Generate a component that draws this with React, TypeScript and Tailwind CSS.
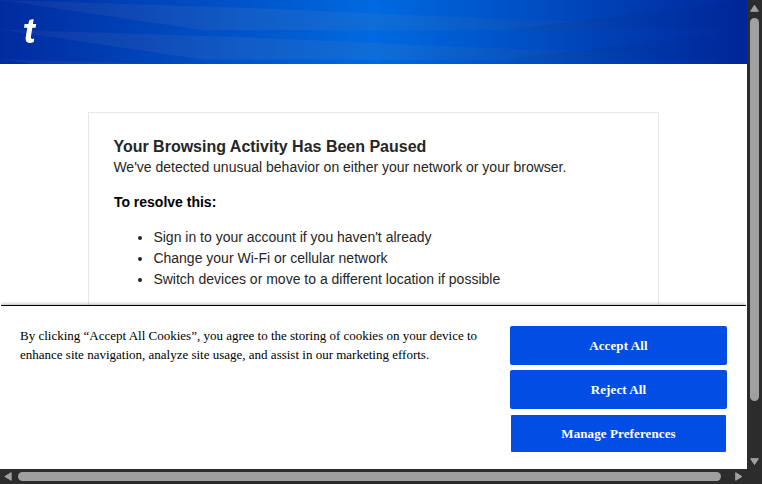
const tips = [
  'Sign in to your account if you haven\'t already',
  'Change your Wi-Fi or cellular network',
  'Switch devices or move to a different location if possible',
];

function HeaderArt() {
  return (
    <svg className="absolute inset-0" width="747" height="64" viewBox="0 0 747 64" aria-hidden="true">
      <defs>
        <linearGradient id="base" x1="0" x2="1" y1="0" y2="0">
          <stop offset="0" stopColor="#002b9f" />
          <stop offset="0.5" stopColor="#006ae0" />
          <stop offset="1" stopColor="#00279b" />
        </linearGradient>
        <linearGradient id="beam" gradientUnits="userSpaceOnUse" x1="0" x2="660" y1="0" y2="0">
          <stop offset="0" stopColor="#5f60b0" stopOpacity="0.14" />
          <stop offset="0.38" stopColor="#7088b0" stopOpacity="0.15" />
          <stop offset="0.6" stopColor="#7088a0" stopOpacity="0.12" />
          <stop offset="0.8" stopColor="#507090" stopOpacity="0.1" />
          <stop offset="1" stopColor="#507090" stopOpacity="0" />
        </linearGradient>
        <linearGradient id="shade" gradientUnits="userSpaceOnUse" x1="510" x2="747" y1="0" y2="0">
          <stop offset="0" stopColor="#003c80" stopOpacity="0.18" />
          <stop offset="1" stopColor="#001c80" stopOpacity="0.12" />
        </linearGradient>
      </defs>
      <rect width="747" height="64" fill="url(#base)" />
      {[0, 29.5, 59].map((y) => (
        <g key={y} transform={`translate(0 ${y})`}>
          <path d="M0 0 L250 8 L500 19 L660 24 V30 H203 Z" fill="url(#beam)" />
          <path d="M508 29.5 L747 0 V29.5 Z" fill="url(#shade)" />
        </g>
      ))}
    </svg>
  );
}

function Header() {
  return (
    <header className="relative h-16 shrink-0 overflow-hidden">
      <HeaderArt />
      <svg className="relative ml-6 mt-[19px]" width="13" height="25" viewBox="0 0 13 25" role="img" aria-label="Logo">
        <path d="M5.4 1 L9.7 0 L8.9 5 H12.2 L11.6 8.7 H8.3 L6.9 17.7 C6.6 19.8 7.8 20.5 10.2 19.6 L9.7 23 C5.7 25.1 0.9 24 1.7 18.6 L3.3 8.7 H0 L0.6 5 H4.3 Z" fill="#fff" />
      </svg>
    </header>
  );
}

function Notice() {
  return (
    <main className="h-[241px] shrink-0 overflow-hidden pt-12 pl-[88px]">
      <section className="h-[300px] w-[571px] border border-[#e8e8e8] pt-[23px] pl-[24.4px] font-['Liberation_Sans',Arial,sans-serif] text-[14px] leading-[21px] text-[#262626]">
        <h1 className="text-[16px] font-bold">Your Browsing Activity Has Been Paused</h1>
        <p>We've detected unusual behavior on either your network or your browser.</p>
        <h2 className="mt-[14px] pl-[0.5px] font-bold text-black">To resolve this:</h2>
        <ul className="mt-[14px] list-disc pl-10">
          {tips.map((tip) => <li key={tip}>{tip}</li>)}
        </ul>
      </section>
    </main>
  );
}

function CookieBanner() {
  return (
    <section className="relative mx-px flex flex-1 border-t border-black bg-white pl-[19px] font-['Liberation_Serif','Times_New_Roman',serif] shadow-[0_0_4px_rgba(0,0,0,0.45)] [clip-path:inset(-6px_0_0_0)]">
      <p className="w-[470px] pt-[20px] text-[13px] leading-[19px] text-black">
        By clicking “Accept All Cookies”, you agree to the storing of cookies on your device to enhance site navigation, analyze site usage, and assist in our marketing efforts.
      </p>
      <div className="ml-[20px] flex w-[217px] flex-col items-center pt-[20px] text-[13px] font-bold tracking-[0.11px] text-white">
        <button className="h-[39px] w-full rounded-[2px] bg-[#024de3]">Accept All</button>
        <button className="mt-[5px] h-[39px] w-full rounded-[2px] bg-[#024de3]">Reject All</button>
        <button className="mt-[6px] h-[37px] w-[215px] rounded-[1px] bg-[#024de3]">Manage Preferences</button>
      </div>
    </section>
  );
}

function Arrow({ d }: { d: string }) {
  return (
    <svg className="block shrink-0" width="9" height="9" viewBox="0 0 9 9" aria-hidden="true">
      <path d={d} fill="#a0a0a0" stroke="#a0a0a0" strokeWidth="1" strokeLinejoin="round" />
    </svg>
  );
}

export default function App() {
  return (
    <div className="flex h-[484px] w-[762px] flex-col overflow-hidden bg-[#2c2c2c]">
      <div className="flex h-[469px]">
        <div className="flex w-[747px] flex-col overflow-hidden bg-white">
          <Header />
          <Notice />
          <CookieBanner />
        </div>
        <div className="flex w-[15px] flex-col items-center pt-1">
          <Arrow d="M4.5 1.3 L8.4 7.3 H0.6 Z" />
          <div className="mt-[5px] h-[383px] w-[9px] rounded-full bg-[#a0a0a0]" />
          <div className="mt-[57px]"><Arrow d="M4.5 6.5 L8.4 0.7 H0.6 Z" /></div>
        </div>
      </div>
      <div className="flex h-[15px] items-center pl-1">
        <Arrow d="M0.8 4.5 L7.2 0.7 V8.3 Z" />
        <div className="ml-[5px] h-[9px] w-[703px] rounded-full bg-[#a0a0a0]" />
        <div className="ml-[14px]"><Arrow d="M6.9 4.5 L0.7 0.7 V8.3 Z" /></div>
      </div>
    </div>
  );
}
